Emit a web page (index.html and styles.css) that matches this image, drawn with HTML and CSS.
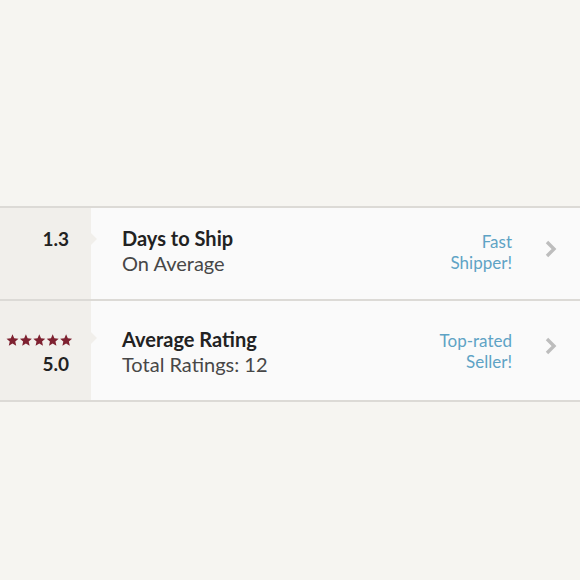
FILE: index.html
```
<!DOCTYPE html>
<html lang="en">
<head>
  <meta charset="UTF-8">
  <title>Shop Stats</title>
  <link rel="stylesheet" href="styles.css">
</head>
<body>
  <div class="stats">
    <div class="row ship">
      <div class="metric">
        <span class="value">1.3</span>
      </div>
      <div class="info">
        <div class="text">
          <div class="title">Days to Ship</div>
          <div class="sub">On Average</div>
        </div>
        <div class="badge">Fast<br>Shipper!</div>
        <svg class="chev" width="12" height="18" viewBox="0 0 12 18">
          <path d="M2 2 L9 9 L2 16" fill="none" stroke="#bdbdbd" stroke-width="3.4"/>
        </svg>
      </div>
    </div>
    <div class="row rating">
      <div class="metric">
        <svg class="stars" width="67" height="12" viewBox="0 0 67 12">
          <defs>
            <path id="star" d="M6.5 0.3 L8.21 4.25 L12.49 4.65 L9.26 7.5 L10.2 11.7 L6.5 9.5 L2.8 11.7 L3.74 7.5 L0.51 4.65 L4.79 4.25 Z" fill="#7e2130"/>
          </defs>
          <use href="#star" x="0"/>
          <use href="#star" x="13.4"/>
          <use href="#star" x="26.8"/>
          <use href="#star" x="40.2"/>
          <use href="#star" x="53.6"/>
        </svg>
        <span class="value">5.0</span>
      </div>
      <div class="info">
        <div class="text">
          <div class="title">Average Rating</div>
          <div class="sub">Total Ratings: 12</div>
        </div>
        <div class="badge">Top-rated<br>Seller!</div>
        <svg class="chev" width="12" height="18" viewBox="0 0 12 18">
          <path d="M2 2 L9 9 L2 16" fill="none" stroke="#bdbdbd" stroke-width="3.4"/>
        </svg>
      </div>
    </div>
  </div>
</body>
</html>
```
FILE: styles.css
```
body {
  margin: 0;
  background: #f6f5f1;
  font-family: Lato, "Open Sans", sans-serif;
  color: #222;
}
.stats {
  margin-top: 206px;
  border-top: 2px solid #dcdad6;
}
.row {
  display: flex;
  border-bottom: 2px solid #dcdad6;
}
.ship {
  height: 91px;
}
.rating {
  height: 99px;
}

/* left column with the number */
.metric {
  position: relative;
  width: 91px;
  flex-shrink: 0;
  background: #f1efeb;
  display: flex;
  flex-direction: column;
  align-items: flex-end;
  padding-right: 22px;
  box-sizing: border-box;
}
.metric::after {
  content: "";
  position: absolute;
  right: -6px;
  top: 25px;
  border-left: 6px solid #f1efeb;
  border-top: 6px solid transparent;
  border-bottom: 6px solid transparent;
}
.ship .metric {
  padding-top: 18px;
}
.rating .metric {
  padding-top: 33px;
  padding-right: 18px;
}
.rating .metric::after {
  top: 31px;
}
.value {
  font-size: 19px;
  font-weight: 700;
  line-height: 25px;
}
.rating .value {
  margin-right: 4px;
  margin-top: 5px;
}
.stars {
  display: block;
}

/* right side */
.info {
  flex: 1;
  background: #fafafa;
  display: flex;
  align-items: flex-start;
  padding-left: 31px;
  padding-right: 23px;
}
.ship .info {
  padding-top: 18px;
}
.rating .info {
  padding-top: 26px;
}
.text {
  flex: 1;
}
.title {
  font-size: 20px;
  font-weight: 700;
  line-height: 25px;
}
.sub {
  font-size: 20px;
  color: #474747;
  line-height: 25px;
}
.rating .sub {
  line-height: 24px;
}
.badge {
  text-align: right;
  color: #5ea3c5;
  font-size: 17px;
  line-height: 21px;
  margin-right: 33px;
}
.ship .badge {
  margin-top: 5px;
}
.rating .badge {
  margin-top: 3px;
}
.chev {
  flex-shrink: 0;
}
.ship .chev {
  margin-top: 14px;
}
.rating .chev {
  margin-top: 10px;
}
```
